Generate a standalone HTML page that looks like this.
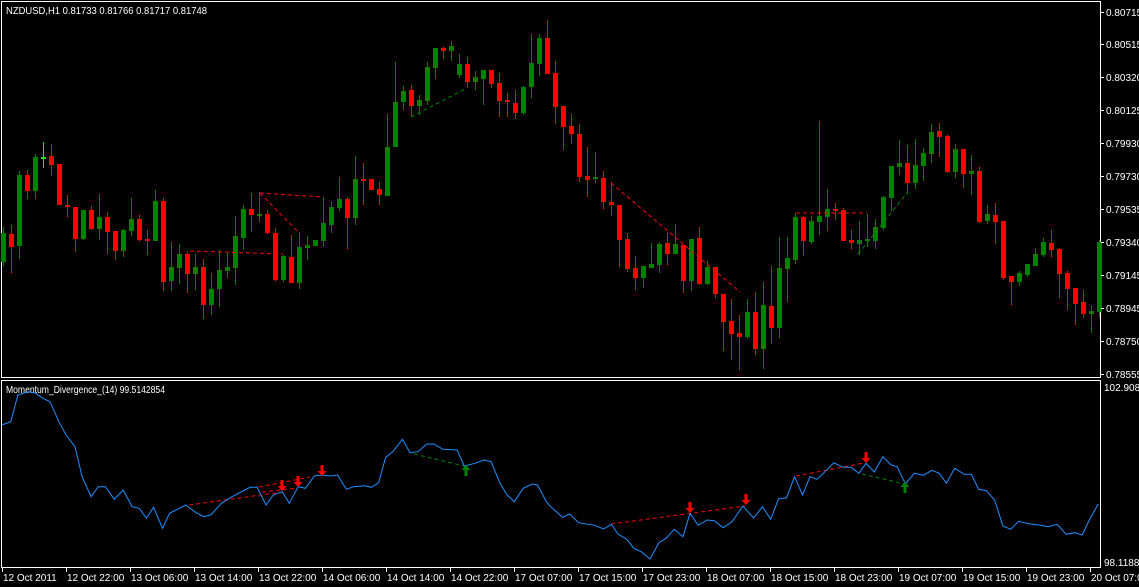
<!DOCTYPE html>
<html><head><meta charset="utf-8"><style>
html,body{margin:0;padding:0;background:#000;width:1139px;height:587px;overflow:hidden}
svg{display:block}
text{font-family:"Liberation Sans",sans-serif;font-size:10px;fill:#fff}
</style></head><body>
<svg id="s" width="1139" height="587" viewBox="0 0 1139 587" xmlns="http://www.w3.org/2000/svg" shape-rendering="crispEdges">
<rect width="1139" height="587" fill="#000"/>
<rect x="1.5" y="1.5" width="1099" height="376" fill="none" stroke="#fff"/>
<rect x="1.5" y="380.5" width="1099" height="187" fill="none" stroke="#fff"/>
<text x="6" y="14" textLength="201" lengthAdjust="spacingAndGlyphs">NZDUSD,H1  0.81733 0.81766 0.81717 0.81748</text>
<text x="6" y="393" textLength="159" lengthAdjust="spacingAndGlyphs">Momentum_Divergence_(14) 99.5142854</text>
<g id="c"></g>
<g id="ax"></g>
<g fill="none" stroke-dasharray="4,3" stroke-width="1" shape-rendering="auto">
<polyline points="190,251 283,254" stroke="#f00"/>
<polyline points="260,193 323,197" stroke="#f00"/>
<polyline points="260,193 298,232" stroke="#f00"/>
<polyline points="411,117 467,88" stroke="#008000"/>
<polyline points="611,183 740,292" stroke="#f00"/>
<polyline points="796,213 867,213" stroke="#f00"/>
<polyline points="858,254 907,193" stroke="#008000"/>
<polyline points="189,505 282,492" stroke="#f00"/>
<polyline points="259,487 310,477" stroke="#f00"/>
<polyline points="262,492 298,488" stroke="#f00"/>
<polyline points="414,454 464,466" stroke="#008000"/>
<polyline points="611,524 745,506" stroke="#f00"/>
<polyline points="796,476 864,463" stroke="#f00"/>
<polyline points="862,474 905,484" stroke="#008000"/>
</g>
<polyline id="mom" fill="none" stroke="#1e90ff" stroke-width="1" shape-rendering="auto"/>
<g id="arr"></g>
</svg>
<script>
var D=[
['g',233,262,227,266],['r',234,247,225,273],['g',175,246,171,259],['r',175,191,170,199],['g',157,191,154,199],['l',157,157,142,168],['r',156,165,144,176],['r',164,205,164,205],['r',205,205,195,217],['r',207,239,207,252],
['g',210,239,210,240],['r',210,229,206,230],['g',217,229,194,240],['r',217,232,212,254],['r',231,251,231,260],['g',230,251,229,257],['g',219,231,198,236],['r',219,240,215,241],['r',239,239,230,255],['g',201,241,190,241],
['r',201,282,198,291],['g',267,281,242,291],['g',254,268,244,284],['r',254,274,251,293],['g',267,274,254,290],['r',267,305,259,319],['g',289,305,273,315],['g',270,289,250,307],['g',267,271,253,278],['g',236,268,216,285],
['g',209,238,205,250],['r',209,215,193,232],['g',214,214,192,222],['r',214,233,210,234],['r',233,280,228,281],['g',256,280,255,282],['r',257,283,235,283],['g',247,283,232,289],['g',245,248,236,260],['g',240,246,240,246],
['g',223,241,197,247],['g',207,225,201,233],['g',199,208,177,211],['r',199,218,197,249],['g',179,218,156,225],['r',179,181,163,205],['r',179,190,179,190],['r',189,195,182,205],['g',147,196,114,196],['g',102,147,62,147],
['g',91,102,86,110],['r',90,106,85,117],['g',100,106,95,115],['g',67,101,62,105],['g',48,68,48,79],['r',48,51,47,59],['g',46,51,41,61],['g',64,75,54,78],['r',64,82,57,88],['g',77,82,71,90],
['g',70,79,70,105],['r',70,84,70,88],['r',83,101,73,117],['r',100,102,93,117],['r',103,113,90,119],['g',87,113,86,115],['g',63,87,34,98],['g',38,64,34,76],['r',38,74,20,74],['r',73,107,61,124],
['r',106,127,106,150],['r',126,134,114,144],['r',134,177,124,182],['r',176,180,147,197],['g',177,177,152,183],['r',178,202,171,209],['r',202,205,182,216],['r',205,240,205,267],['r',239,269,233,272],['r',268,278,256,290],
['g',266,278,266,288],['g',264,268,243,268],['g',244,265,242,273],['r',243,254,232,265],['g',244,254,224,254],['r',245,281,245,293],['g',239,281,239,291],['r',238,284,227,285],['g',267,284,261,285],['r',267,294,267,298],
['r',294,322,294,351],['r',321,334,299,360],['r',333,337,315,370],['g',312,337,299,339],['r',312,349,292,355],['g',305,349,282,369],['r',306,328,266,344],['g',268,328,237,338],['g',258,269,237,302],['g',217,260,213,264],
['r',217,241,216,256],['g',221,242,216,244],['g',216,222,121,235],['g',209,217,189,231],['r',209,211,203,220],['r',210,241,208,241],['r',240,243,230,249],['g',240,244,221,255],['g',239,241,214,247],['g',227,241,219,249],
['g',197,228,196,230],['g',166,198,166,211],['g',163,167,140,175],['r',163,183,145,194],['g',165,183,139,189],['g',153,166,148,181],['g',132,154,124,163],['r',131,137,123,157],['r',136,172,135,173],['g',149,172,144,178],
['r',149,174,149,188],['g',171,174,155,195],['r',171,222,167,223],['g',214,221,205,224],['r',215,222,203,244],['r',221,278,221,280],['r',276,282,276,305],['g',273,282,271,286],['g',264,275,264,277],['g',254,266,248,266],
['g',242,255,238,257],['r',243,250,230,257],['r',249,274,248,298],['r',273,289,271,310],['r',288,304,290,325],['r',302,314,290,318],['g',311,314,305,333],['g',242,312,240,318]];
var h="";
var col={g:'#008000',r:'#ff0000',l:'#00ff00'};
D.forEach(function(d,k){var x=3+8*k,c=col[d[0]];
h+='<rect x="'+x+'" y="'+d[3]+'" width="1" height="'+Math.max(1,d[4]-d[3])+'" fill="'+c+'"/>';
var bh=d[2]-d[1];
h+='<rect x="'+(x-2)+'" y="'+d[1]+'" width="5" height="'+(bh<2?2:bh)+'" fill="'+c+'"/>';});
document.getElementById('c').innerHTML=h;
var a="",L=[["0.80715",12],["0.80515",44],["0.80320",77],["0.80125",110],["0.79930",143],["0.79730",176],["0.79535",209],["0.79340",242],["0.79145",275],["0.78945",308],["0.78750",341],["0.78555",374]];
L.forEach(function(l){a+='<rect x="1101" y="'+l[1]+'" width="3" height="1" fill="#fff"/><text x="1106" y="'+(l[1]+4)+'">'+l[0]+'</text>';});
a+='<text x="1104" y="391">102.908</text><text x="1104" y="566">98.1188</text>';
var T=["12 Oct 2011","12 Oct 22:00","13 Oct 06:00","13 Oct 14:00","13 Oct 22:00","14 Oct 06:00","14 Oct 14:00","14 Oct 22:00","17 Oct 07:00","17 Oct 15:00","17 Oct 23:00","18 Oct 07:00","18 Oct 15:00","18 Oct 23:00","19 Oct 07:00","19 Oct 15:00","19 Oct 23:00","20 Oct 07:00"];
T.forEach(function(t,i){var x=2+64*i;a+='<rect x="'+x+'" y="568" width="1" height="4" fill="#fff"/><text x="'+(x+1)+'" y="581">'+t+'</text>';});
document.getElementById('ax').innerHTML=a;
var P1=[[5,165],[30,155],[50,75],[80,65],[100,70],[120,85],[140,95],[165,155],[185,195],[210,230],[230,320],[255,380],[275,350],[295,350],[320,388],[345,360],[370,410],[390,415],[410,445],[430,412],[455,475],[475,430],[520,405],[545,425],[570,440],[590,435],[620,400],[650,380],[700,352],[720,352],[745,405],[765,375],[790,365],[810,400],[835,350],[855,355],[880,318],[900,315],[925,318],[945,315],[970,358],[990,350],[1020,347],[1040,352],[1060,338],[1080,262],[1100,245],[1127,208],[1148,248],[1170,245],[1195,222],[1215,222],[1240,238],[1280,240],[1300,288],[1330,280],[1355,270],[1375,275],[1400,340],[1420,375],[1440,395],[1465,355],[1490,342],[1505,345],[1530,395]];
var P2=[[0,378],[35,412],[55,402],[80,428],[125,436],[150,447],[172,433],[190,462],[215,478],[235,505],[255,515],[280,537],[305,488],[325,475],[348,448],[372,470],[392,400],[415,436],[440,420],[460,422],[485,443],[510,425],[540,378],[570,414],[595,380],[618,418],[640,356],[662,354],[685,290],[707,345],[728,290],[748,298],[770,275],[795,248],[820,262],[843,262],[865,280],[885,250],[908,276],[932,230],[955,255],[972,260],[995,312],[1020,280],[1045,286],[1070,271],[1090,280],[1110,310],[1133,265],[1160,283],[1180,283],[1200,328],[1222,332],[1245,360],[1268,438],[1290,448],[1312,424],[1340,431],[1370,435],[1395,440],[1420,433],[1445,463],[1470,458],[1490,465],[1510,420],[1535,372]];
var pts=P1.map(function(p){return (p[0]/2.8).toFixed(1)+','+(370+p[1]/3).toFixed(1)});
pts=pts.concat(P2.map(function(p){return (550+p[0]/2.8).toFixed(1)+','+(380+p[1]/3).toFixed(1)}));
document.getElementById('mom').setAttribute('points',pts.join(' '));
function arrow(x,top,c,up){var p;
if(!up)p='M'+(x-1.5)+','+top+'h3v6h3l-4.5,5l-4.5,-5h3z';
else p='M'+x+','+top+'l4.5,5h-3v6h-3v-6h-3z';
return '<path d="'+p+'" fill="'+c+'" shape-rendering="auto"/>';}
var ar="";
ar+=arrow(282,480,'#f00');ar+=arrow(298,476,'#f00');ar+=arrow(322,465,'#f00');
ar+=arrow(690,502,'#f00');ar+=arrow(746,494,'#f00');ar+=arrow(866,452,'#f00');
ar+=arrow(466,465,'#008000',true);ar+=arrow(905,482,'#008000',true);
document.getElementById('arr').innerHTML=ar;
</script>
</body></html>
